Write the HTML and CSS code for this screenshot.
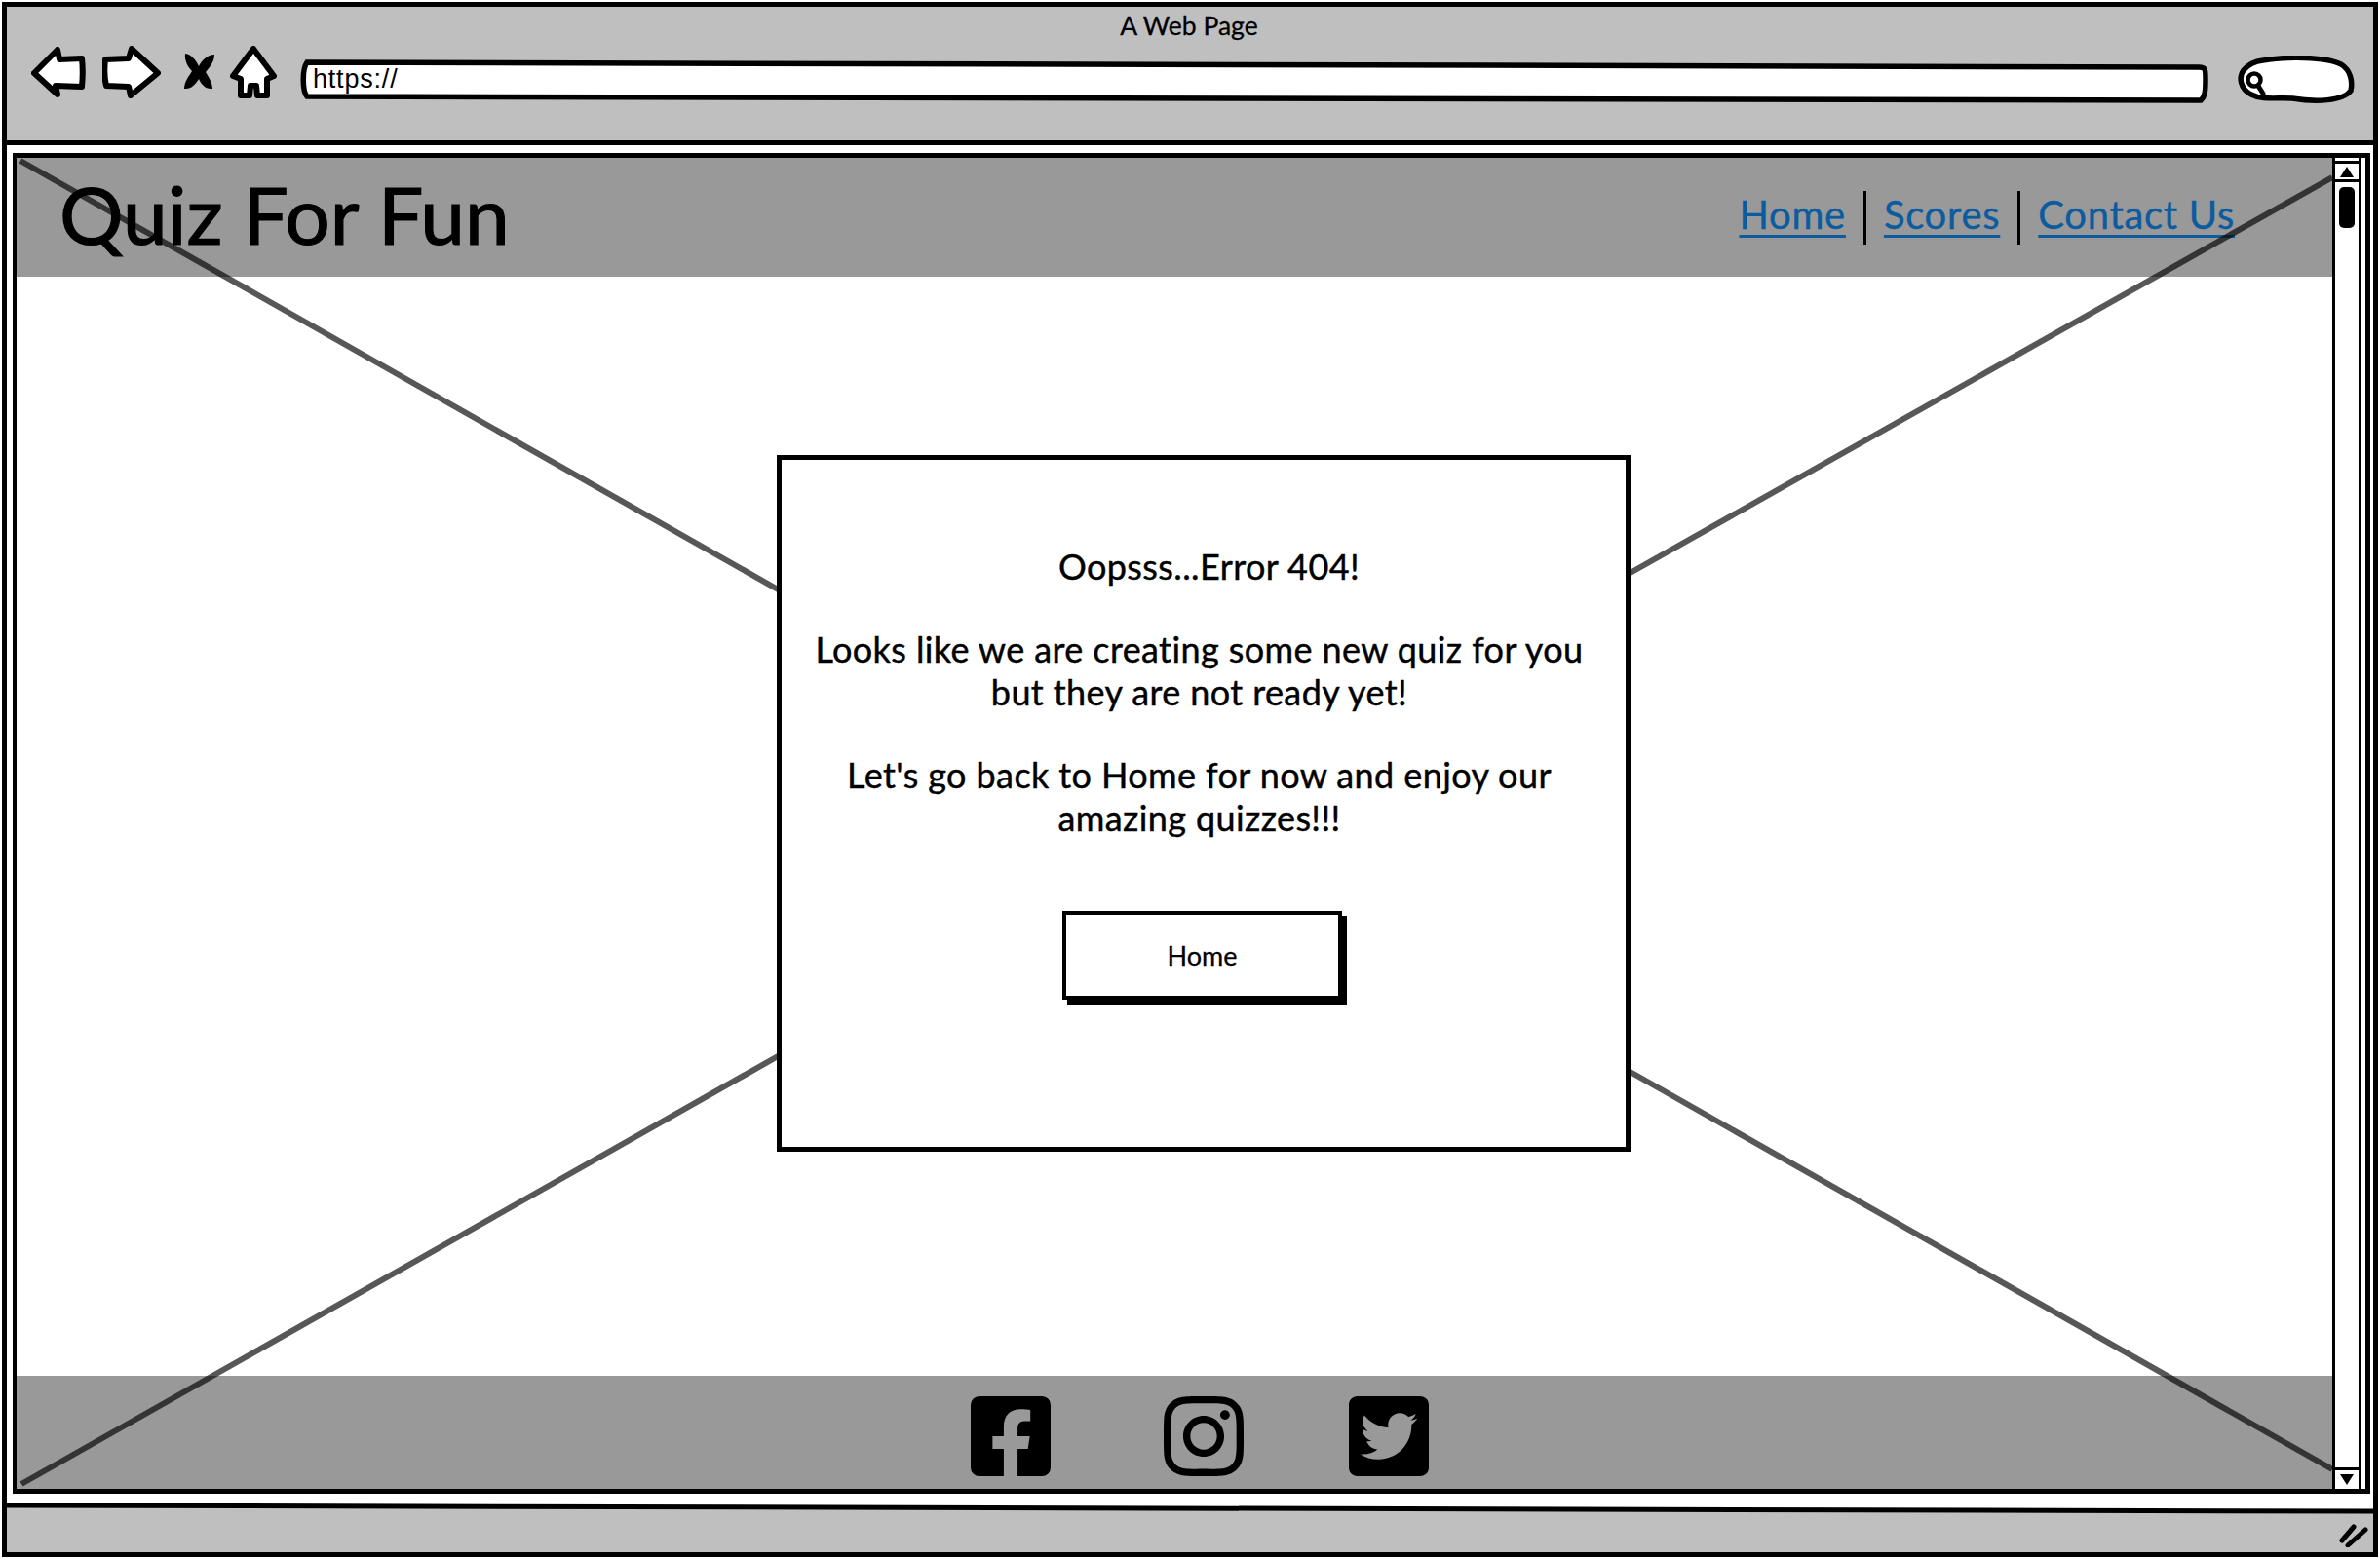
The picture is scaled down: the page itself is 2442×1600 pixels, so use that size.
FILE: index.html
```html
<!DOCTYPE html>
<html lang="en">
<head>
<meta charset="utf-8">
<title>A Web Page</title>
<link rel="stylesheet" href="styles.css">
</head>
<body>
<div class="window">
  <header class="chrome">
    <div class="chrome-title">A Web Page</div>
    <div class="toolbar">
      <svg class="ic-back" viewBox="32 47 56 52"><path class="tool" d="M35 74 59 50 61 60 84 59C85 68 85 78 84 88L57 87 59 96Z"/></svg>
      <svg class="ic-forward" viewBox="105 47 60 54"><path class="tool" d="M108 61 132 60 135 50 162 75 134 98 132 89 109 88C107 80 107 70 108 61Z"/></svg>
      <svg class="ic-stop" viewBox="188 53 33 38"><path class="stop" d="M190 53C197 54 201 60 204 66 207 60 213 54 220 54 220 62 214 68 211 72 214 77 218 83 218 89 211 90 206 84 204 79 201 84 196 90 189 89 189 82 194 76 197 71 193 67 189 60 190 53Z"/></svg>
      <svg class="ic-home" viewBox="236 46 48 54"><path class="tool" d="M260 49 281 77 274 80 274 97 264 97 263 87 257 87 256 97 247 97 247 80 239 77Z"/></svg>
      <div class="url">
        <svg class="url-shape" viewBox="0 0 1960 46" preserveAspectRatio="none"><path class="field" d="M7 3 1950 8C1957 8 1957 10 1957 20 1957 30 1957 38 1952 42L7 38C2 32 2 10 7 3Z"/></svg>
        <span class="url-text">https://</span>
      </div>
      <svg class="search" viewBox="0 0 120 50"><path class="field" d="M26 5C50 1 90 1 106 9 116 15 118 27 116 36 108 47 80 48 56 44 40 43 25 46 14 40 2 34 1 22 6 15 11 9 18 6 26 5Z"/><circle class="lens" cx="17" cy="25" r="6.5"/><path class="lens-handle" d="M21 31 26 39"/></svg>
    </div>
  </header>

  <div class="viewport">
    <div class="frame">
      <div class="page">
        <div class="site-header">
          <div class="brand">Quiz For Fun</div>
          <nav class="nav">
            <a class="nav-link" href="#">Home</a>
            <span class="nav-sep"></span>
            <a class="nav-link" href="#">Scores</a>
            <span class="nav-sep"></span>
            <a class="nav-link" href="#">Contact Us</a>
          </nav>
        </div>
        <main class="main">
          <section class="card">
            <p class="msg msg-head">Oopsss...Error 404!</p>
            <p class="msg">Looks like we are creating some new quiz for you<br>but they are not ready yet!</p>
            <p class="msg">Let's go back to Home for now and enjoy our<br>amazing quizzes!!!</p>
            <a class="btn" href="#">Home</a>
          </section>
        </main>
        <footer class="site-footer">
          <svg class="social" viewBox="0 32 448 448"><path d="M400 32H48A48 48 0 0 0 0 80v352a48 48 0 0 0 48 48h137.25V327.69h-63V256h63v-54.64c0-62.15 37-96.48 93.67-96.48 27.14 0 55.52 4.84 55.52 4.84v61h-31.27c-30.81 0-40.42 19.12-40.42 38.73V256h68.78l-11 71.69h-57.78V480H400a48 48 0 0 0 48-48V80a48 48 0 0 0-48-48z"/></svg>
          <svg class="social social-mid" viewBox="0 32 448 448"><path d="M224.1 141c-63.6 0-114.9 51.3-114.9 114.9s51.3 114.9 114.9 114.9S339 319.5 339 255.9 287.7 141 224.1 141zm0 189.6c-41.1 0-74.7-33.5-74.7-74.7s33.5-74.7 74.7-74.7 74.7 33.5 74.7 74.7-33.6 74.7-74.7 74.7zm146.4-194.3c0 14.9-12 26.8-26.8 26.8-14.9 0-26.8-12-26.8-26.8s12-26.8 26.8-26.8 26.8 12 26.8 26.8zm76.1 27.2c-1.7-35.9-9.9-67.7-36.2-93.9-26.2-26.2-58-34.4-93.9-36.2-37-2.1-147.9-2.1-184.9 0-35.8 1.7-67.6 9.9-93.9 36.1s-34.4 58-36.2 93.9c-2.1 37-2.1 147.9 0 184.9 1.7 35.9 9.9 67.7 36.2 93.9s58 34.4 93.9 36.2c37 2.1 147.9 2.1 184.9 0 35.9-1.7 67.7-9.9 93.9-36.2 26.2-26.2 34.4-58 36.2-93.9 2.1-37 2.1-147.8 0-184.8zM398.8 388c-7.8 19.6-22.9 34.7-42.6 42.6-29.5 11.7-99.5 9-132.1 9s-102.7 2.6-132.1-9c-19.6-7.8-34.7-22.9-42.6-42.6-11.7-29.5-9-99.5-9-132.1s-2.6-102.7 9-132.1c7.8-19.6 22.9-34.7 42.6-42.6 29.5-11.7 99.5-9 132.1-9s102.7-2.6 132.1 9c19.6 7.8 34.7 22.9 42.6 42.6 11.7 29.5 9 99.5 9 132.1s2.7 102.7-9 132.1z"/></svg>
          <svg class="social" viewBox="0 32 448 448"><path d="M400 32H48C21.5 32 0 53.5 0 80v352c0 26.5 21.5 48 48 48h352c26.5 0 48-21.5 48-48V80c0-26.5-21.5-48-48-48zm-48.9 158.8c.2 2.8.2 5.7.2 8.5 0 86.7-66 186.6-186.6 186.6-37.2 0-71.7-10.8-100.7-29.4 5.3.6 10.4.8 15.8.8 30.7 0 58.9-10.4 81.4-28-28.8-.6-53-19.5-61.3-45.5 10.1 1.5 19.2 1.5 29.6-1.2-30-6.1-52.5-32.5-52.5-64.4v-.8c8.7 4.9 18.9 7.9 29.6 8.3a65.447 65.447 0 0 1-29.2-54.6c0-12.2 3.2-23.4 8.9-33.1 32.3 39.8 80.8 65.8 135.2 68.6-9.3-44.5 24-80.6 64-80.6 18.9 0 35.9 7.9 48.1 20.7 14.9-2.8 29.2-8.3 41.9-15.8-4.9 15.2-15.2 28.1-28.8 36.2 13.2-1.5 26-5.1 37.8-10.2-8.9 13.1-20.1 24.7-32.9 34z"/></svg>
        </footer>
        <svg class="cross" viewBox="0 0 2376 1366" aria-hidden="true">
          <path d="M4 3 790 448"/>
          <path d="M5 1361 790 917"/>
          <path d="M2376 20 1645 432"/>
          <path d="M2376 1346 1645 932"/>
        </svg>
      </div>
      <div class="scrollbar">
        <div class="sb-btn sb-btn-up"><svg class="sb-arrow" viewBox="0 0 14 11"><path d="M7 0 14 11H0Z"/></svg></div>
        <div class="sb-track"><div class="sb-thumb"></div></div>
        <div class="sb-btn sb-btn-down"><svg class="sb-arrow" viewBox="0 0 14 11"><path d="M0 0H14L7 11Z"/></svg></div>
      </div>
    </div>
  </div>

  <div class="status">
    <svg class="status-shape" viewBox="0 0 2428 50" preserveAspectRatio="none"><path class="status-fill" d="M0 2 2428 8V50H0Z"/><path class="status-line" d="M0 2 2428 8"/></svg>
    <svg class="grip" viewBox="0 0 30 25"><path d="M3 18 15 4M9 23 27 7"/></svg>
  </div>
</div>
</body>
</html>
```
FILE: styles.css
```css
* { box-sizing: border-box; }
html, body { margin: 0; padding: 0; }
body {
  width: 2442px;
  height: 1600px;
  overflow: hidden;
  background: #fff;
  font-family: "Lato", "Noto Sans", sans-serif;
  color: #000;
}

.window {
  margin: 2px;
  width: 2438px;
  height: 1596px;
  border: 5px solid #000;
  display: flex;
  flex-direction: column;
  background: #fff;
}

.chrome {
  height: 142px;
  background: #bfbfbf;
  border-bottom: 5px solid #000;
  padding: 3px 19px 0 25px;
  flex: none;
}
.chrome-title {
  height: 32px;
  line-height: 32px;
  margin-right: 8px;
  text-align: center;
  font-size: 26.5px;
  -webkit-text-stroke: .3px #000;
}
.toolbar {
  display: flex;
  align-items: center;
  height: 54px;
  margin-top: 5px;
}
.tool { fill: #fff; stroke: #000; stroke-width: 6; stroke-linejoin: round; }
.stop { fill: #000; }
.field { fill: #fff; stroke: #000; stroke-width: 5.5; }
.lens { fill: none; stroke: #000; stroke-width: 4.5; }
.lens-handle { fill: none; stroke: #000; stroke-width: 5; stroke-linecap: round; }
.ic-back { width: 56px; height: 52px; margin-right: 17px; flex: none; }
.ic-forward { width: 60px; height: 54px; margin-right: 23px; flex: none; }
.ic-stop { width: 33px; height: 38px; margin-right: 15px; flex: none; }
.ic-home { width: 48px; height: 54px; margin-right: 24px; flex: none; }
.url {
  position: relative;
  flex: 1;
  height: 46px;
  margin-top: 20px;
  display: flex;
  align-items: center;
  padding: 0 0 6px 13px;
}
.url-shape { position: absolute; inset: 0; width: 100%; height: 100%; }
.url-text {
  position: relative;
  font-family: "Liberation Sans", Arial, sans-serif;
  font-size: 27px;
  letter-spacing: .8px;
}
.search { width: 120px; height: 50px; margin: 16px 0 0 30px; flex: none; }

.viewport {
  flex: 1;
  min-height: 0;
  padding: 8px 3px 10px 6px;
  background: #fff;
}
.frame {
  height: 100%;
  border: 5px solid #000;
  border-left-width: 4px;
  display: flex;
}
.page {
  position: relative;
  flex: 1;
  min-width: 0;
  display: flex;
  flex-direction: column;
  overflow: hidden;
}
.site-header {
  height: 122px;
  background: #999;
  display: flex;
  align-items: center;
  justify-content: space-between;
  padding: 0 100px 6px 44px;
  flex: none;
}
.brand {
  font-size: 82px;
  line-height: 1;
  margin-top: -2px;
  -webkit-text-stroke: 1.2px #000;
}
.nav { display: flex; align-items: center; }
.nav-link {
  color: #0b5b9f;
  font-size: 40px;
  letter-spacing: .7px;
  -webkit-text-stroke: .4px #0b5b9f;
  text-decoration: underline;
  text-decoration-thickness: 3px;
  text-underline-offset: 6px;
}
.nav-sep {
  width: 3px;
  height: 55px;
  background: #000;
  margin: 6px 18px 0;
}
.main {
  flex: 1;
  min-height: 0;
  padding: 183px 0 0 780px;
}
.card {
  position: relative;
  z-index: 2;
  width: 876px;
  height: 715px;
  background: #fff;
  border: 5px solid #000;
  padding: 87px 9px 0 0;
  text-align: center;
}
.msg {
  margin: 0 0 41px;
  font-size: 36px;
  line-height: 44px;
  letter-spacing: .4px;
  -webkit-text-stroke: .45px #000;
}
.msg-head { padding-left: 20px; }
.btn {
  display: block;
  width: 287px;
  height: 91px;
  margin: 74px 0 0 288px;
  border: 4px solid #000;
  box-shadow: 5px 5px 0 #000;
  background: #fff;
  color: #000;
  text-decoration: none;
  font-size: 27px;
  line-height: 83px;
  text-align: center;
  -webkit-text-stroke: .3px #000;
}
.site-footer {
  height: 116px;
  background: #999;
  display: flex;
  align-items: center;
  padding: 8px 0 0 979px;
  flex: none;
}
.social { width: 82px; height: 82px; flex: none; margin-right: 116px; }
.social-mid { margin-right: 108px; }
.cross {
  position: absolute;
  inset: 0;
  width: 100%;
  height: 100%;
  z-index: 1;
  pointer-events: none;
}
.cross path { stroke: rgba(0,0,0,.66); stroke-width: 6; fill: none; }

.scrollbar {
  width: 30px;
  margin-right: 4px;
  border-left: 3px solid #000;
  border-right: 3px solid #000;
  display: flex;
  flex-direction: column;
  flex: none;
  background: #fff;
}
.sb-btn {
  height: 22px;
  flex: none;
  display: flex;
  align-items: center;
  justify-content: center;
  background: #fff;
}
.sb-btn-up { border-top: 3px solid #000; border-bottom: 3px solid #000; margin-top: 3px; }
.sb-btn-down { border-top: 3px solid #000; }
.sb-arrow { width: 14px; height: 11px; display: block; }
.sb-track { flex: 1; padding: 5px 3px 0 4px; }
.sb-thumb { width: 16px; height: 42px; background: #000; border-radius: 5px; }

.status {
  position: relative;
  flex: none;
  height: 50px;
}
.status-shape { position: absolute; inset: 0; width: 100%; height: 100%; display: block; }
.status-fill { fill: #bfbfbf; }
.status-line { fill: none; stroke: #000; stroke-width: 5; }
.grip { position: absolute; right: 5px; bottom: 5px; width: 30px; height: 25px; }
.grip path { fill: none; stroke: #000; stroke-width: 5; stroke-linecap: round; }
```
